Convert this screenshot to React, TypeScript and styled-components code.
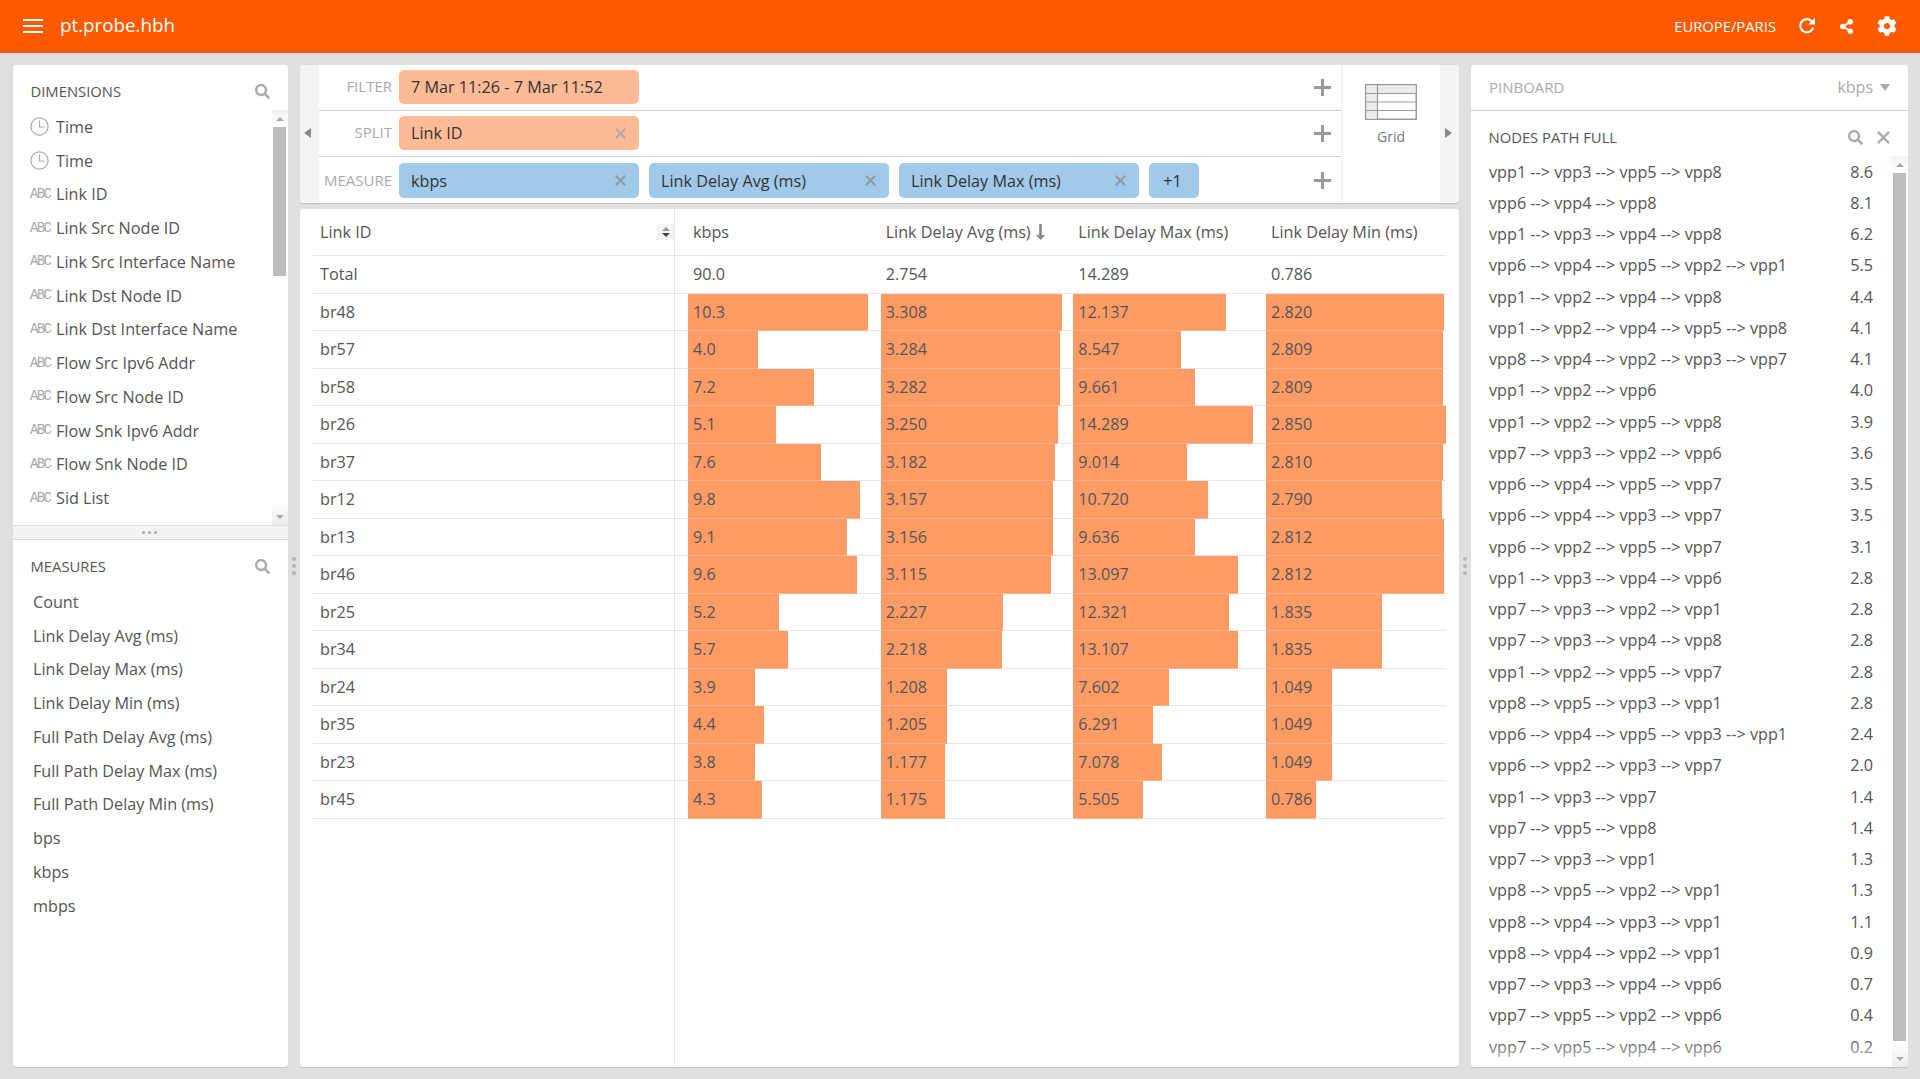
import React from "react";
import styled, { createGlobalStyle } from "styled-components";
import { FaCog, FaSearch, FaShareAlt } from "react-icons/fa";

const Global = createGlobalStyle`
  html, body { margin: 0; padding: 0; height: 100%; background: #e0e0e0; }
  * { box-sizing: border-box; }
  body { font-family: "Open Sans", "Noto Sans", sans-serif; font-size: 16.2px; color: #555; overflow: hidden; }
`;

const Page = styled.div`display: flex; flex-direction: column; width: 1920px; height: 1079px;`;

const TopBar = styled.header`
  height: 53px; flex: none; display: flex; align-items: center; background: #ff5a00; color: #fff; padding: 0 23px;
`;
const Burger = styled.div`
  width: 20px; height: 14px; border-top: 2px solid #fff; border-bottom: 2px solid #fff; position: relative; margin-top: -1px;
  &::after { content: ""; position: absolute; left: 0; right: 0; top: 4px; height: 2px; background: #fff; }
`;
const AppTitle = styled.div`margin-left: 17px; font-size: 18.8px; line-height: 27px; flex: 1; margin-top: -2px;`;
const Zone = styled.div`font-size: 14.8px; text-transform: uppercase; margin-top: -1px; margin-right: -1px;`;
const TopIcon = styled.div<{ $w: number }>`
  width: ${p => p.$w}px; margin-left: 23px; display: flex; align-items: center; justify-content: center; margin-top: -1px;
`;

const Main = styled.main`flex: 1; display: flex; padding: 12px 12px 12px 13px; min-height: 0;`;
const Panel = styled.section`
  background: #fff; border-radius: 3px; box-shadow: 0 1px 1px rgba(0,0,0,.14); display: flex; flex-direction: column; overflow: hidden;
`;
const LeftPanel = styled(Panel)`width: 275px; flex: none;`;
const RightPanel = styled(Panel)`width: 437px; flex: none;`;
const Gutter = styled.div`
  width: 12px; flex: none; display: flex; flex-direction: column; align-items: center; justify-content: center; gap: 3px;
  i { width: 4px; height: 4px; border-radius: 50%; background: #b5b5b5; display: block; }
`;
const Center = styled.div`width: 1159px; flex: none; display: flex; flex-direction: column; gap: 6px;`;

const SectionHead = styled.div`
  height: 45px; flex: none; display: flex; align-items: flex-start; justify-content: space-between;
  padding: 16px 18px 0 17.5px; font-size: 14.8px; line-height: 20px; color: #555; text-transform: uppercase;
`;
const HeadIcons = styled.div`display: flex; align-items: center; gap: 14px; height: 20px; color: #aaa;`;
const DimSection = styled.div`height: 460px; flex: none; display: flex; flex-direction: column;`;
const ListWrap = styled.div`flex: 1; min-height: 0; display: flex; position: relative;`;
const List = styled.div`flex: 1; min-width: 0; overflow: hidden;`;
const Track = styled.div`
  width: 16px; flex: none; position: relative; padding: 17px 2px 0 1px;
  background: linear-gradient(#f2f2f2, #fff 16px, #fff calc(100% - 24px), #ececec);
`;
const Thumb = styled.div<{ $h: number }>`height: ${p => p.$h}px; background: #bdbdbd;`;
const Arrow = styled.i<{ $up?: boolean }>`
  position: absolute; left: 4px; width: 0; height: 0; border-left: 4px solid transparent; border-right: 4px solid transparent;
  ${p => p.$up ? "top: 7px; border-bottom: 4px solid #aaa;" : "bottom: 6px; border-top: 4px solid #aaa;"}
`;
const FieldRow = styled.div<{ $inset: number }>`
  height: 33.75px; display: flex; align-items: center; padding-left: ${p => p.$inset}px; font-size: 16.2px; color: #555; white-space: nowrap;
`;
const FieldIcon = styled.span`
  width: 20px; margin-right: 6px; flex: none; display: flex; justify-content: flex-start; color: #aaa;
`;
const AbcMark = styled.span`
  font-family: "Liberation Mono", monospace; font-size: 14px; line-height: 12px; letter-spacing: -1.7px; color: #aaa; margin-top: -1px;
`;
const Divider = styled.div`
  height: 15px; flex: none; background: #f3f3f3; border-top: 1px solid #ddd; border-bottom: 1px solid #ddd;
  display: flex; align-items: center; justify-content: center; gap: 3px; padding-right: 3px;
  i { width: 3px; height: 3px; border-radius: 50%; background: #aaa; display: block; }
`;
const Grow = styled.div`flex: 1; min-height: 0; display: flex; flex-direction: column;`;

const Shelf = styled.div`
  height: 138px; flex: none; display: flex; border-radius: 3px; overflow: hidden; box-shadow: 0 1px 1px rgba(0,0,0,.14); background: #f4f4f4;
`;
const SideArrow = styled.div<{ $shift: number }>`
  width: 19px; flex: none; display: flex; align-items: center; justify-content: center; padding: 0 ${p => p.$shift}px 3px 0;
`;
const Tri = styled.i<{ $dir: "l" | "r" }>`
  width: 0; height: 0; border-top: 5px solid transparent; border-bottom: 5px solid transparent;
  ${p => p.$dir === "l" ? "border-right: 7px solid #888;" : "border-left: 7px solid #888;"}
`;
const ShelfRows = styled.div`width: 1022px; flex: none; display: flex; flex-direction: column; background: #fff;`;
const ShelfRow = styled.div<{ $last?: boolean }>`
  height: 46px; display: flex; align-items: flex-start; padding-top: ${p => p.$last ? 6 : 5}px;
  border-bottom: ${p => p.$last ? "none" : "1px solid #d0d0d0"};
`;
const ShelfLabel = styled.div<{ $tall?: boolean }>`
  width: 73px; flex: none; text-align: right; font-size: 15px; line-height: ${p => p.$tall ? 34 : 33}px; color: #aaa; text-transform: uppercase;
`;
const Pills = styled.div`flex: 1; display: flex; gap: 10px; margin-left: 7px;`;
const Pill = styled.div<{ $color: string; $tall?: boolean; $narrow?: boolean }>`
  width: ${p => p.$narrow ? 50 : 240}px; height: ${p => p.$tall ? 35 : 34}px; border-radius: 5px; background: ${p => p.$color};
  display: flex; align-items: center; justify-content: ${p => p.$narrow ? "center" : "space-between"};
  padding: ${p => p.$narrow ? "0 3px 0 0" : "0 13px 0 12px"}; font-size: 16.2px; color: #333; white-space: nowrap;
`;
const PlusBox = styled.div`width: 38px; flex: none; height: 34px; display: flex; align-items: center; justify-content: center;`;
const GridTile = styled.div`
  width: 97px; margin-left: 2px; flex: none; background: #fff; display: flex; flex-direction: column; align-items: center;
  padding: 19px 1px 0 0; border-radius: 0 4px 4px 0;
`;
const GridName = styled.div`margin-top: 7px; font-size: 14px; line-height: 20px; color: #777;`;

const TablePanel = styled(Panel)`flex: 1; min-height: 0;`;
const GridRow = styled.div<{ $h: number; $plain?: boolean }>`
  flex: none; height: ${p => p.$h}px; margin: 0 13px; display: grid;
  grid-template-columns: 362px 192.67px 192.67px 192.67px 1fr;
  border-bottom: ${p => p.$plain ? "none" : "1px solid #e6e6e6"};
`;
const Filler = styled(GridRow)`flex: 1; height: auto;`;
const KeyCell = styled.div`
  border-right: 1px solid #e6e6e6; padding-left: 7px; display: flex; align-items: center; justify-content: space-between; font-size: 16.2px; color: #555;
`;
const ValueCell = styled.div`
  position: relative; padding-left: 18px; display: flex; align-items: center; font-size: 16.2px; color: #555; white-space: nowrap;
`;
const CellText = styled.span`position: relative;`;
const Bar = styled.div`
  position: absolute; left: 13px; top: 0; bottom: -1px; background: #ff9c66; border-bottom: 1px solid #ffb08a;
`;
const SortBox = styled.div`
  width: 17px; height: 16px; background: #f3f3f3; display: flex; flex-direction: column; align-items: center; justify-content: center; gap: 2px;
`;
const SortTri = styled.i<{ $up?: boolean }>`
  width: 0; height: 0; border-left: 4px solid transparent; border-right: 4px solid transparent;
  ${p => p.$up ? "border-bottom: 4px solid #999;" : "border-top: 4px solid #444;"}
`;
const SortArrow = styled.svg`margin-left: 5px; flex: none;`;

const PinHead = styled.div`
  height: 46px; flex: none; border-bottom: 1px solid #cfcfcf; display: flex; align-items: center; justify-content: space-between;
  padding: 0 18px 2px 18px; font-size: 15px; color: #aaa;
`;
const PinUnit = styled.div`display: flex; align-items: center; gap: 7px; font-size: 16px;`;
const PinCaret = styled.i`
  width: 0; height: 0; border-left: 5.5px solid transparent; border-right: 5.5px solid transparent; border-top: 7px solid #aaa; margin-top: 1px;
`;
const NodeRow = styled.div`
  height: 31.25px; display: flex; align-items: center; justify-content: space-between; padding: 0 19px 0 18px; font-size: 16.2px; color: #555; white-space: nowrap;
`;
const Fade = styled.div`
  position: absolute; left: 0; right: 16px; bottom: 0; height: 28px; background: linear-gradient(rgba(255,255,255,0), rgba(255,255,255,.75));
`;

const dims: [string, string][] = [
  ["t", "Time"], ["t", "Time"], ["a", "Link ID"], ["a", "Link Src Node ID"], ["a", "Link Src Interface Name"],
  ["a", "Link Dst Node ID"], ["a", "Link Dst Interface Name"], ["a", "Flow Src Ipv6 Addr"], ["a", "Flow Src Node ID"],
  ["a", "Flow Snk Ipv6 Addr"], ["a", "Flow Snk Node ID"], ["a", "Sid List"],
];
const measures = ["Count", "Link Delay Avg (ms)", "Link Delay Max (ms)", "Link Delay Min (ms)", "Full Path Delay Avg (ms)",
  "Full Path Delay Max (ms)", "Full Path Delay Min (ms)", "bps", "kbps", "mbps"];

const rows: [string, string, number, string, string, string][] = [
  ["br48", "10.3", 180, "3.308", "12.137", "2.820"],
  ["br57", "4.0", 70, "3.284", "8.547", "2.809"],
  ["br58", "7.2", 126, "3.282", "9.661", "2.809"],
  ["br26", "5.1", 88, "3.250", "14.289", "2.850"],
  ["br37", "7.6", 133, "3.182", "9.014", "2.810"],
  ["br12", "9.8", 172, "3.157", "10.720", "2.790"],
  ["br13", "9.1", 159, "3.156", "9.636", "2.812"],
  ["br46", "9.6", 169, "3.115", "13.097", "2.812"],
  ["br25", "5.2", 91, "2.227", "12.321", "1.835"],
  ["br34", "5.7", 100, "2.218", "13.107", "1.835"],
  ["br24", "3.9", 67, "1.208", "7.602", "1.049"],
  ["br35", "4.4", 76, "1.205", "6.291", "1.049"],
  ["br23", "3.8", 67, "1.177", "7.078", "1.049"],
  ["br45", "4.3", 74, "1.175", "5.505", "0.786"],
];

const nodes: [string, string][] = [
  ["vpp1 --> vpp3 --> vpp5 --> vpp8", "8.6"], ["vpp6 --> vpp4 --> vpp8", "8.1"], ["vpp1 --> vpp3 --> vpp4 --> vpp8", "6.2"],
  ["vpp6 --> vpp4 --> vpp5 --> vpp2 --> vpp1", "5.5"], ["vpp1 --> vpp2 --> vpp4 --> vpp8", "4.4"],
  ["vpp1 --> vpp2 --> vpp4 --> vpp5 --> vpp8", "4.1"], ["vpp8 --> vpp4 --> vpp2 --> vpp3 --> vpp7", "4.1"],
  ["vpp1 --> vpp2 --> vpp6", "4.0"], ["vpp1 --> vpp2 --> vpp5 --> vpp8", "3.9"], ["vpp7 --> vpp3 --> vpp2 --> vpp6", "3.6"],
  ["vpp6 --> vpp4 --> vpp5 --> vpp7", "3.5"], ["vpp6 --> vpp4 --> vpp3 --> vpp7", "3.5"], ["vpp6 --> vpp2 --> vpp5 --> vpp7", "3.1"],
  ["vpp1 --> vpp3 --> vpp4 --> vpp6", "2.8"], ["vpp7 --> vpp3 --> vpp2 --> vpp1", "2.8"], ["vpp7 --> vpp3 --> vpp4 --> vpp8", "2.8"],
  ["vpp1 --> vpp2 --> vpp5 --> vpp7", "2.8"], ["vpp8 --> vpp5 --> vpp3 --> vpp1", "2.8"],
  ["vpp6 --> vpp4 --> vpp5 --> vpp3 --> vpp1", "2.4"], ["vpp6 --> vpp2 --> vpp3 --> vpp7", "2.0"], ["vpp1 --> vpp3 --> vpp7", "1.4"],
  ["vpp7 --> vpp5 --> vpp8", "1.4"], ["vpp7 --> vpp3 --> vpp1", "1.3"], ["vpp8 --> vpp5 --> vpp2 --> vpp1", "1.3"],
  ["vpp8 --> vpp4 --> vpp3 --> vpp1", "1.1"], ["vpp8 --> vpp4 --> vpp2 --> vpp1", "0.9"], ["vpp7 --> vpp3 --> vpp4 --> vpp6", "0.7"],
  ["vpp7 --> vpp5 --> vpp2 --> vpp6", "0.4"], ["vpp7 --> vpp5 --> vpp4 --> vpp6", "0.2"],
];

const Clock = () => (
  <svg width="19" height="19" viewBox="0 0 19 19" fill="none" stroke="#aaa" strokeWidth="1.2">
    <circle cx="9.5" cy="9.5" r="8.6" />
    <path d="M9.5 3.6V10H14.6" />
  </svg>
);
const Cross = ({ size = 11, color = "#a9a9a9" }: { size?: number; color?: string }) => (
  <svg width={size} height={size} viewBox="0 0 11 11" stroke={color} strokeWidth="2" fill="none">
    <path d="M.8.8l9.4 9.4M10.2.8L.8 10.2" />
  </svg>
);
const Plus = () => (
  <svg width="17" height="17" viewBox="0 0 17 17" fill="#999"><path d="M7 0h3v7h7v3h-7v7H7v-7H0V7h7z" /></svg>
);
const Refresh = () => (
  <svg width="18" height="18" viewBox="0 0 18 18" fill="none">
    <path d="M15.2 10.5A6.6 6.6 0 1 1 13.4 3.9" stroke="#fff" strokeWidth="2.1" />
    <path d="M17 .6V7.4H10.2z" fill="#fff" />
  </svg>
);
const GridGlyph = () => (
  <svg width="52" height="36" viewBox="0 0 52 36">
    <rect x=".75" y=".75" width="50.5" height="34.5" fill="#fff" stroke="#999" strokeWidth="1.5" />
    <rect x="1.5" y="1.5" width="49" height="8" fill="#ebebeb" />
    <rect x="1.5" y="9" width="11" height="25.5" fill="#ebebeb" />
    <path d="M12.5 1v34M1 9.5h50M1 18h50M1 26.5h50" stroke="#999" strokeWidth="1.2" />
  </svg>
);
const Dots = () => <><i /><i /><i /></>;

const bar = (v: string, max: number, full: number) => (parseFloat(v) / max) * full;

export default function App() {
  return (
    <Page>
      <Global />
      <TopBar>
        <Burger />
        <AppTitle>pt.probe.hbh</AppTitle>
        <Zone>Europe/Paris</Zone>
        <TopIcon $w={18}><Refresh /></TopIcon>
        <TopIcon $w={15}><FaShareAlt size={15} color="#fff" /></TopIcon>
        <TopIcon $w={20}><FaCog size={20} color="#fff" /></TopIcon>
      </TopBar>
      <Main>
        <LeftPanel>
          <DimSection>
            <SectionHead>Dimensions<HeadIcons><FaSearch size={15} /></HeadIcons></SectionHead>
            <ListWrap>
              <List>
                {dims.map(([k, name], i) => (
                  <FieldRow key={i} $inset={17}>
                    <FieldIcon>{k === "t" ? <Clock /> : <AbcMark>ABC</AbcMark>}</FieldIcon>
                    {name}
                  </FieldRow>
                ))}
              </List>
              <Track><Arrow $up /><Thumb $h={149} /><Arrow /></Track>
            </ListWrap>
          </DimSection>
          <Divider><Dots /></Divider>
          <Grow>
            <SectionHead>Measures<HeadIcons><FaSearch size={15} /></HeadIcons></SectionHead>
            <List>
              {measures.map(m => <FieldRow key={m} $inset={20}>{m}</FieldRow>)}
            </List>
          </Grow>
        </LeftPanel>
        <Gutter><Dots /></Gutter>
        <Center>
          <Shelf>
            <SideArrow $shift={5}><Tri $dir="l" /></SideArrow>
            <ShelfRows>
              <ShelfRow>
                <ShelfLabel>Filter</ShelfLabel>
                <Pills><Pill $color="#ffbb95">7 Mar 11:26 - 7 Mar 11:52</Pill></Pills>
                <PlusBox><Plus /></PlusBox>
              </ShelfRow>
              <ShelfRow>
                <ShelfLabel>Split</ShelfLabel>
                <Pills><Pill $color="#ffbb95">Link ID<Cross /></Pill></Pills>
                <PlusBox><Plus /></PlusBox>
              </ShelfRow>
              <ShelfRow $last>
                <ShelfLabel $tall>Measure</ShelfLabel>
                <Pills>
                  <Pill $color="#a1c9e9" $tall>kbps<Cross color="#8c9aa6" /></Pill>
                  <Pill $color="#a1c9e9" $tall>Link Delay Avg (ms)<Cross color="#8c9aa6" /></Pill>
                  <Pill $color="#a1c9e9" $tall>Link Delay Max (ms)<Cross color="#8c9aa6" /></Pill>
                  <Pill $color="#a1c9e9" $tall $narrow>+1</Pill>
                </Pills>
                <PlusBox><Plus /></PlusBox>
              </ShelfRow>
            </ShelfRows>
            <GridTile><GridGlyph /><GridName>Grid</GridName></GridTile>
            <SideArrow $shift={2}><Tri $dir="r" /></SideArrow>
          </Shelf>
          <TablePanel>
            <GridRow $h={47}>
              <KeyCell>Link ID<SortBox><SortTri $up /><SortTri /></SortBox></KeyCell>
              <ValueCell>kbps</ValueCell>
              <ValueCell>
                Link Delay Avg (ms)
                <SortArrow width="9" height="16" viewBox="0 0 9 16" fill="#888"><path d="M3.2 0h2.6v11H9l-4.5 5L0 11h3.2z" /></SortArrow>
              </ValueCell>
              <ValueCell>Link Delay Max (ms)</ValueCell>
              <ValueCell>Link Delay Min (ms)</ValueCell>
            </GridRow>
            <GridRow $h={37.5}>
              <KeyCell>Total</KeyCell>
              <ValueCell>90.0</ValueCell>
              <ValueCell>2.754</ValueCell>
              <ValueCell>14.289</ValueCell>
              <ValueCell>0.786</ValueCell>
            </GridRow>
            {rows.map(([id, kbps, kw, avg, max, min]) => (
              <GridRow key={id} $h={37.5}>
                <KeyCell>{id}</KeyCell>
                <ValueCell><Bar style={{ width: kw }} /><CellText>{kbps}</CellText></ValueCell>
                <ValueCell><Bar style={{ width: bar(avg, 3.308, 181) }} /><CellText>{avg}</CellText></ValueCell>
                <ValueCell><Bar style={{ width: bar(max, 14.289, 180) }} /><CellText>{max}</CellText></ValueCell>
                <ValueCell><Bar style={{ width: bar(min, 2.85, 180) }} /><CellText>{min}</CellText></ValueCell>
              </GridRow>
            ))}
            <Filler $h={0} $plain><KeyCell /></Filler>
          </TablePanel>
        </Center>
        <Gutter><Dots /></Gutter>
        <RightPanel>
          <PinHead>PINBOARD<PinUnit>kbps<PinCaret /></PinUnit></PinHead>
          <SectionHead>
            Nodes Path Full
            <HeadIcons><FaSearch size={15} /><Cross size={13} color="#aaa" /></HeadIcons>
          </SectionHead>
          <ListWrap>
            <List>
              {nodes.map(([path, v], i) => <NodeRow key={i}><span>{path}</span><span>{v}</span></NodeRow>)}
            </List>
            <Fade />
            <Track><Arrow $up /><Thumb $h={868} /><Arrow /></Track>
          </ListWrap>
        </RightPanel>
      </Main>
    </Page>
  );
}
